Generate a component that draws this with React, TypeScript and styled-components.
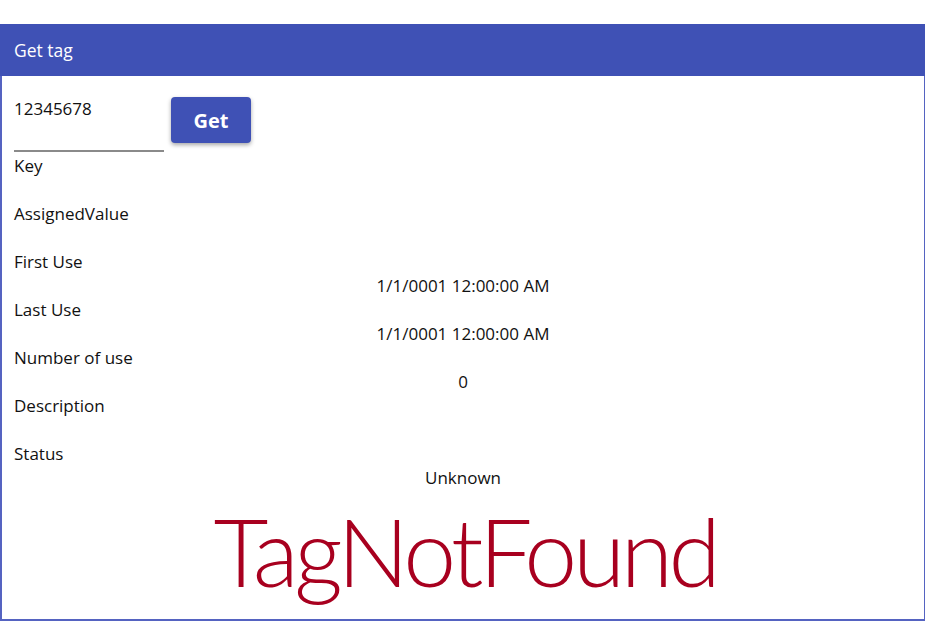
import React from "react";
import styled, { createGlobalStyle } from "styled-components";

const GlobalStyle = createGlobalStyle`
  html, body { margin: 0; padding: 0; background: #ffffff; }
  body { font-family: "Open Sans", "Noto Sans", sans-serif; color: #111; }
`;

const Page = styled.div`
  padding-top: 24px;
`;

const Panel = styled.section`
  width: 925px;
  display: flex;
  flex-direction: column;
`;

const Header = styled.header`
  height: 52px;
  background: #3f51b5;
  color: #ffffff;
  font-size: 17.5px;
  display: flex;
  align-items: center;
  padding-left: 14px;
`;

const Body = styled.div`
  height: 545px;
  box-sizing: border-box;
  border: 1px solid #5563c1;
  border-left-width: 2px;
  border-bottom-width: 2px;
  border-top: none;
  padding: 12px 12px 0;
  display: flex;
  flex-direction: column;
`;

const SearchRow = styled.div`
  display: flex;
  align-items: flex-start;
`;

const InputBox = styled.div`
  width: 150px;
  height: 64px;
  box-sizing: border-box;
  border-bottom: 2px solid #8a8a8a;
  padding-top: 9px;
  font-size: 17px;
  line-height: 24px;
`;

const GetButton = styled.button`
  margin: 9px 0 0 7px;
  width: 80px;
  height: 46px;
  border: none;
  border-radius: 4px;
  background: #3f51b5;
  color: #ffffff;
  font-family: inherit;
  font-size: 20px;
  font-weight: 700;
  box-shadow: 0 2px 4px rgba(0, 0, 0, 0.35);
  cursor: pointer;
`;

const Fields = styled.div`
  margin-top: 2px;
  display: flex;
  flex-direction: column;
`;

const Label = styled.div`
  height: 24px;
  line-height: 24px;
  font-size: 17px;
`;

const Value = styled.div`
  height: 24px;
  line-height: 24px;
  font-size: 17px;
  text-align: center;
`;

const Result = styled.div`
  text-align: center;
  font-family: "Lato", "Open Sans", sans-serif;
  font-size: 95px;
  font-weight: 300;
  letter-spacing: -4.4px;
  line-height: 1.2;
  margin-top: 3px;
  padding-left: 4px;
  color: #a8001f;
`;

const fields: { label: string; value: string }[] = [
  { label: "Key", value: "" },
  { label: "AssignedValue", value: "" },
  { label: "First Use", value: "1/1/0001 12:00:00 AM" },
  { label: "Last Use", value: "1/1/0001 12:00:00 AM" },
  { label: "Number of use", value: "0" },
  { label: "Description", value: "" },
  { label: "Status", value: "Unknown" },
];

export default function App() {
  return (
    <Page>
      <GlobalStyle />
      <Panel>
        <Header>Get tag</Header>
        <Body>
          <SearchRow>
            <InputBox>12345678</InputBox>
            <GetButton>Get</GetButton>
          </SearchRow>
          <Fields>
            {fields.map((f) => (
              <React.Fragment key={f.label}>
                <Label>{f.label}</Label>
                <Value>{f.value}</Value>
              </React.Fragment>
            ))}
          </Fields>
          <Result>TagNotFound</Result>
        </Body>
      </Panel>
    </Page>
  );
}
